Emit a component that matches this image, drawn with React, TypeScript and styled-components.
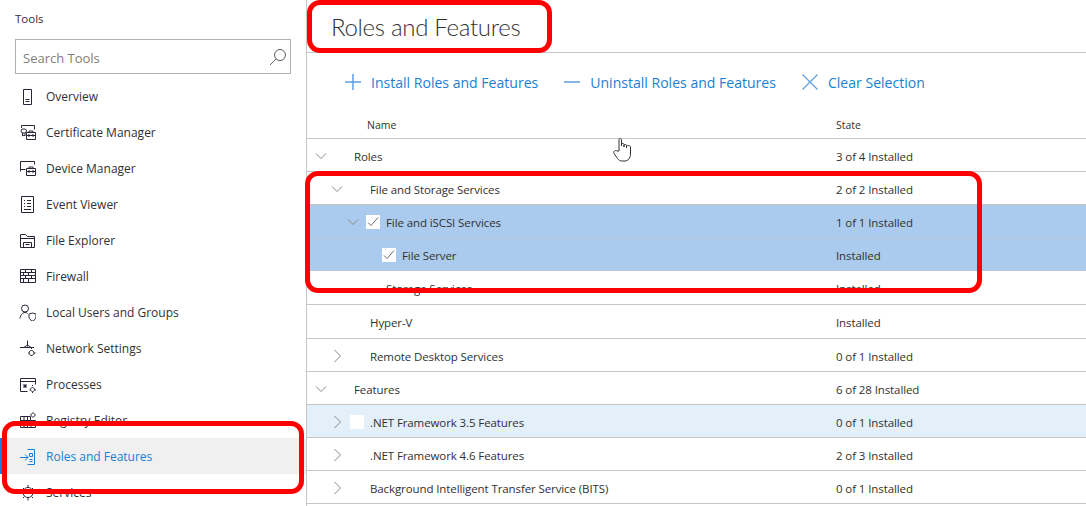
import React from "react";
import styled, { createGlobalStyle } from "styled-components";

const GlobalStyle = createGlobalStyle`
  html, body {
    margin: 0;
    padding: 0;
    background: #ffffff;
    overflow: hidden;
  }
  * { box-sizing: border-box; }
`;

const font = `"Open Sans", "Noto Sans", "Liberation Sans", sans-serif`;
const line = "#c8c6c4";
const textColor = "#323130";
const blue = "#1a7fd4";

const Page = styled.div`
  position: relative;
  width: 1086px;
  height: 506px;
  display: flex;
  overflow: hidden;
  font-family: ${font};
  font-size: 12px;
  color: ${textColor};
`;

const Sidebar = styled.aside`
  width: 307px;
  flex: none;
  border-right: 1px solid ${line};
  padding-top: 10px;
`;

const SideTitle = styled.div`
  height: 18px;
  line-height: 18px;
  margin-left: 15px;
  font-size: 11.5px;
`;

const SearchBox = styled.div`
  margin: 11px 15px 4px;
  width: 276px;
  height: 35px;
  border: 1px solid #b3b0ad;
  display: flex;
  align-items: center;
  justify-content: space-between;
  padding: 2px 3px 0 7px;
  font-size: 13px;
  color: #807e7c;
  svg {
    margin-top: -2px;
  }
`;

const NavList = styled.nav`
  display: flex;
  flex-direction: column;
`;

const NavRow = styled.div<{ $active?: boolean }>`
  height: 36px;
  flex: none;
  display: flex;
  align-items: center;
  gap: 10px;
  border-left: ${(p) => (p.$active ? `2px solid ${blue}` : "none")};
  padding-left: ${(p) => (p.$active ? "17px" : "19px")};
  background: ${(p) => (p.$active ? "#f0f0f0" : "transparent")};
  color: ${(p) => (p.$active ? blue : textColor)};
  svg {
    flex: none;
    fill: none;
    stroke: ${(p) => (p.$active ? blue : "#2a2438")};
    stroke-width: 1;
  }
`;

const Main = styled.main`
  flex: 1;
  min-width: 0;
`;

const PageTitle = styled.h1`
  margin: 0;
  height: 53px;
  padding: 9px 0 0 24px;
  border-bottom: 1px solid ${line};
  font-family: Lato, ${font};
  font-size: 24px;
  letter-spacing: -0.3px;
  line-height: 36px;
  font-weight: 300;
  color: ${textColor};
`;

const Toolbar = styled.div`
  height: 60px;
  display: flex;
  align-items: center;
  padding: 0 0 2px 38px;
  gap: 26px;
`;

const ToolButton = styled.div`
  display: flex;
  align-items: center;
  gap: 10px;
  font-size: 14.05px;
  color: ${blue};
  svg {
    fill: none;
    stroke: #5f9fe0;
  }
`;

const Row = styled.div<{ $tone?: "selected" | "hover"; $tall?: boolean }>`
  height: ${(p) => (p.$tall ? 34 : 33)}px;
  display: flex;
  align-items: center;
  padding-top: 2px;
  font-size: 11.5px;
  letter-spacing: -0.1px;
  border-bottom: 1px solid
    ${(p) => (p.$tone === "selected" ? "#b7c6d6" : line)};
  background: ${(p) =>
    p.$tone === "selected"
      ? "#abcbee"
      : p.$tone === "hover"
        ? "#e3eff9"
        : "transparent"};
`;

const HeadRow = styled.div`
  height: 26px;
  display: flex;
  align-items: center;
  padding-bottom: 2px;
  border-bottom: 1px solid ${line};
  font-size: 10.5px;
`;

const NameCell = styled.div<{ $level: number }>`
  width: 529px;
  flex: none;
  display: flex;
  align-items: center;
  padding-left: ${(p) => p.$level * 16}px;
`;

const HeadName = styled.div`
  width: 529px;
  flex: none;
  padding-left: 60px;
`;

const ChevronSlot = styled.div`
  width: 27px;
  height: 14px;
  flex: none;
  display: flex;
  justify-content: center;
  svg {
    fill: none;
    stroke: #8a8886;
    stroke-width: 1;
  }
`;

const CheckSlot = styled.div`
  width: 20px;
  flex: none;
`;

const CheckBox = styled.div`
  width: 14px;
  height: 14px;
  background: #ffffff;
  display: flex;
  align-items: center;
  justify-content: center;
  svg {
    fill: none;
    stroke: #6d6b6a;
    stroke-width: 1;
  }
`;

const Callout = styled.div<{ $x: number; $y: number; $w: number; $h: number }>`
  position: absolute;
  left: ${(p) => p.$x}px;
  top: ${(p) => p.$y}px;
  width: ${(p) => p.$w}px;
  height: ${(p) => p.$h}px;
  border: 5px solid #ff0000;
  border-radius: 13px;
  pointer-events: none;
`;

const HandCursor = styled.svg`
  position: absolute;
  left: 613px;
  top: 138px;
`;

type IconName =
  | "overview"
  | "cert"
  | "device"
  | "event"
  | "files"
  | "firewall"
  | "users"
  | "network"
  | "processes"
  | "registry"
  | "roles"
  | "services";

const iconPaths: Record<IconName, string> = {
  overview: "M4.5 1.5h8v15h-8zM6.500 13.500h4M6.500 11.500h4",
  cert: "M2.500 4V1.500h13v4M4 5h1.500a1.500 1.500 0 0 1 0 4H4a1.500 1.500 0 0 1 0-4zM3.500 9v3l1.500-1 1 1V9M7.500 8.500h9v7h-9zM10 8.500V7h4v1.500M7.500 11.500h9M10 10v3M14 10v3",
  device: "M1.500 11.500v-10h14v3M1.500 9.500h5M7.500 8.500h9v7h-9zM10 8.500V7h4v1.500M7.500 11.500h9M10 10v3M14 10v3",
  event: "M2.500 .5h12v16h-12zM5 4.500h1M8 4.500h4M5 7.500h1M8 7.500h4M5 10.500h1M8 10.500h4M5 13.500h7",
  files: "M1.500 15.500v-13h5l2 2h7v11zM1.500 6.500h14M4.500 15.500v-5h8v5M6.500 12.500h4",
  firewall: "M1.500 1.500h15v13h-15zM1.500 4.500h15M1.500 7.500h15M1.500 10.500h15M6.500 1.500v3M12.500 1.500v3M4.500 4.500v3M9.500 4.500v3M6.500 7.500v3M12.500 7.500v3M4.500 10.500v4M9.500 10.500v4",
  users: "M9.500 4.500a3.500 3.500 0 1 1-7 0a3.500 3.500 0 0 1 7 0M1 14.500c.4-3 2-6 5-6 1 0 2 .3 2.500 1M10 10l3.500-1 3.500 1v3c0 2-1.500 3-3.500 4-2-1-3.500-2-3.500-4z",
  network: "M8.500 .5v6M1 7.500h14M5 7.500l3.500-2.500 3.500 2.500M12.500 10.500a2.500 2.500 0 1 0 .01 0M12.500 9v-1M12.500 16v-1M9.500 13h1M15 13h1.500",
  processes: "M1.500 15.500v-13h15v6M1.500 5.500h15M1.500 15.500h7M6 8v4M4 10h4M4.500 8.500l3 3M7.500 8.500l-3 3M13.500 11.500a2 2 0 1 0 .01 0M13.500 10v-1M13.500 17v-1M10.500 14h1M15.500 14h1.500",
  registry: "M1.500 4.500h10v4h5v7h-15zM1.500 8.500h10M1.500 12h15M5 4.500v11M8.500 4.500v11M12 8.500v7M14 .5l2.500 2.500-2.500 2.500-2.500-2.500z",
  roles: "M8.500 1.500h7v15h-7M10.500 5.500h3v3h-3zM10.500 11.500h3M10.500 13.500h3M1 9.500h8M6 6.500l3 3-3 3",
  services: "M9 3.500a5 5 0 1 0 .01 0M9 1v2.500M9 14v2.500M1.500 9h2.500M14 9h2.500M4 4l1.500 1.500M12.500 12.500 14 14M14 4l-1.500 1.500M5.500 12.500 4 14",
};

const NavIcon = ({ name }: { name: IconName }) => (
  <svg width="17" height="17" viewBox="0 0 17 17">
    <path d={iconPaths[name]} />
  </svg>
);

const navItems: { icon: IconName; label: string; active?: boolean }[] = [
  { icon: "overview", label: "Overview" },
  { icon: "cert", label: "Certificate Manager" },
  { icon: "device", label: "Device Manager" },
  { icon: "event", label: "Event Viewer" },
  { icon: "files", label: "File Explorer" },
  { icon: "firewall", label: "Firewall" },
  { icon: "users", label: "Local Users and Groups" },
  { icon: "network", label: "Network Settings" },
  { icon: "processes", label: "Processes" },
  { icon: "registry", label: "Registry Editor" },
  { icon: "roles", label: "Roles and Features", active: true },
  { icon: "services", label: "Services" },
];

type TreeRow = {
  name: string;
  state: string;
  level: number;
  chevron?: "open" | "closed";
  check?: "on" | "off";
  tone?: "selected" | "hover";
  tall?: boolean;
};

const rows: TreeRow[] = [
  { name: "Roles", state: "3 of 4 Installed", level: 0, chevron: "open" },
  { name: "File and Storage Services", state: "2 of 2 Installed", level: 1, chevron: "open" },
  { name: "File and iSCSI Services", state: "1 of 1 Installed", level: 2, chevron: "open", check: "on", tone: "selected" },
  { name: "File Server", state: "Installed", level: 3, check: "on", tone: "selected" },
  { name: "Storage Services", state: "Installed", level: 2, tall: true },
  { name: "Hyper-V", state: "Installed", level: 1, tall: true },
  { name: "Remote Desktop Services", state: "0 of 1 Installed", level: 1, chevron: "closed" },
  { name: "Features", state: "6 of 28 Installed", level: 0, chevron: "open" },
  { name: ".NET Framework 3.5 Features", state: "0 of 1 Installed", level: 1, chevron: "closed", check: "off", tone: "hover" },
  { name: ".NET Framework 4.6 Features", state: "2 of 3 Installed", level: 1, chevron: "closed" },
  { name: "Background Intelligent Transfer Service (BITS)", state: "0 of 1 Installed", level: 1, chevron: "closed" },
];

const Chevron = ({ dir }: { dir: "open" | "closed" }) => (
  <svg width="14" height="14" viewBox="0 0 14 14">
    <path d={dir === "open" ? "M2 4.500l5 5 5-5" : "M4.500 1l6 6-6 6"} />
  </svg>
);

const App = () => (
  <Page>
    <GlobalStyle />
    <Sidebar>
      <SideTitle>Tools</SideTitle>
      <SearchBox>
        Search Tools
        <svg width="18" height="18" viewBox="0 0 18 18" fill="none" stroke="#5f5e5c">
          <circle cx="11" cy="7" r="5.500" />
          <path d="M7 11l-6 6" />
        </svg>
      </SearchBox>
      <NavList>
        {navItems.map((item) => (
          <NavRow key={item.label} $active={item.active}>
            <NavIcon name={item.icon} />
            {item.label}
          </NavRow>
        ))}
      </NavList>
    </Sidebar>
    <Main>
      <PageTitle>Roles and Features</PageTitle>
      <Toolbar>
        <ToolButton>
          <svg width="16" height="16" viewBox="0 0 16 16" strokeWidth="1.5">
            <path d="M0 8h16M8 0v16" />
          </svg>
          Install Roles and Features
        </ToolButton>
        <ToolButton>
          <svg width="16" height="16" viewBox="0 0 16 16" strokeWidth="1.5">
            <path d="M0 8h16" />
          </svg>
          Uninstall Roles and Features
        </ToolButton>
        <ToolButton>
          <svg width="16" height="16" viewBox="0 0 16 16" strokeWidth="1.200">
            <path d="M.5.5l15 15M15.500.5l-15 15" />
          </svg>
          Clear Selection
        </ToolButton>
      </Toolbar>
      <HeadRow>
        <HeadName>Name</HeadName>
        <div>State</div>
      </HeadRow>
      {rows.map((row) => (
        <Row key={row.name} $tone={row.tone} $tall={row.tall}>
          <NameCell $level={row.level}>
            <ChevronSlot>{row.chevron && <Chevron dir={row.chevron} />}</ChevronSlot>
            <CheckSlot>
              {row.check && (
                <CheckBox>
                  {row.check === "on" && (
                    <svg width="14" height="14" viewBox="0 0 14 14">
                      <path d="M2 7.500l3 3 7-8" />
                    </svg>
                  )}
                </CheckBox>
              )}
            </CheckSlot>
            {row.name}
          </NameCell>
          <div>{row.state}</div>
        </Row>
      ))}
    </Main>
    <HandCursor width="20" height="25" viewBox="0 0 20 25" fill="#ffffff" stroke="#333333">
      <path d="M6 13V2C6 0 8.500 0 8.500 2V8V6.500C8.500 5 11 5 11 6.500V9V7.500C11 6 13.500 6 13.500 7.500V10V8.500C13.500 7.200 17.500 7.200 17.500 9V16C17.500 20 15 23 12 23H9C7 23 5.500 22 4.500 20.500L1 15.500C0 14 2 11.500 4 13Z" />
    </HandCursor>
    <Callout $x={2} $y={421} $w={302} $h={73} />
    <Callout $x={307} $y={0} $w={245} $h={53} />
    <Callout $x={305} $y={171} $w={677} $h={122} />
  </Page>
);

export default App;
